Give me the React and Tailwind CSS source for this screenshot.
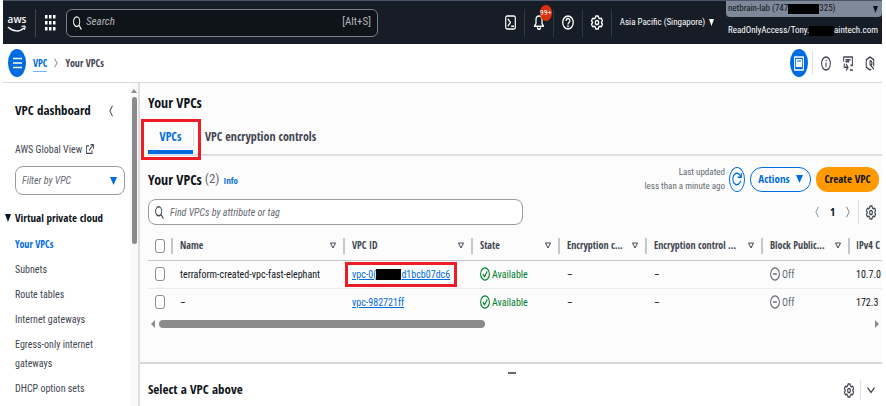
import clsx from 'clsx'

const NAV_ITEMS = [
  'Your VPCs',
  'Subnets',
  'Route tables',
  'Internet gateways',
  'Egress-only internet gateways',
  'DHCP option sets',
]

const COLUMNS = [
  { label: 'Name', width: 'w-[172px]' },
  { label: 'VPC ID', width: 'w-[128px]' },
  { label: 'State', width: 'w-[87px]' },
  { label: 'Encryption c...', width: 'w-[87px]' },
  { label: 'Encryption control ...', width: 'w-[116px]' },
  { label: 'Block Public...', width: 'w-[87px]' },
]

const ROWS = [
  { name: 'terraform-created-vpc-fast-elephant', idStart: 'vpc-0(', idEnd: 'd1bcb07dc6', cidr: '10.7.0' },
  { name: '–', idStart: 'vpc-982721ff', cidr: '172.3' },
]

const REGULAR = "font-['Roboto_Condensed','Open_Sans',sans-serif]"
const BOLD = "font-['Open_Sans_Condensed','Open_Sans',sans-serif] font-bold"

// Stroke icons share a 16x16 box and take their size from the class
function Icon({ className = 'w-[11px] h-4', children }) {
  return (
    <svg viewBox="0 0 16 16" preserveAspectRatio="none" aria-hidden="true" fill="none" stroke="currentColor"
      strokeWidth={1.7} strokeLinejoin="round" className={clsx('shrink-0', className)}>
      {children}
    </svg>
  )
}

const SearchIcon = ({ className }) => (
  <Icon className={className}><circle cx="6.5" cy="6.5" r="5.5" /><path d="M10.5 10.5 15 15.5" /></Icon>
)

const GearIcon = ({ className }) => (
  <Icon className={className}>
    <path d="M6.4 1h3.2l.6 2 1.7 1 2-.5 1.5 2.7L14 7.5v1l1.4 1.3-1.5 2.7-2-.5-1.7 1-.6 2H6.4l-.6-2-1.7-1-2 .5L.6 9.8 2 8.5v-1L.6 6.2l1.5-2.7 2 .5 1.7-1z" />
    <circle cx="8" cy="8" r="2.2" />
  </Icon>
)

const Chevron = ({ d, className }) => <Icon className={className}><path d={d} strokeWidth="2.2" /></Icon>

const LEFT = 'M12 1 5 8l7 7'
const RIGHT = 'M4 1l7 7-7 7'
const DOWN = 'M1 4l7 8 7-8'

function Triangle({ className, d = 'M0 0h8L4 8z' }) {
  return (
    <svg viewBox="0 0 8 8" preserveAspectRatio="none" aria-hidden="true" fill="currentColor" className={clsx('shrink-0', className)}>
      <path d={d} />
    </svg>
  )
}

function Divider({ className }) {
  return <span className={clsx('w-px shrink-0', className)} />
}

function TopBar() {
  return (
    <header className="flex h-11 items-center border-t border-[#4b5768] bg-[#161d26] text-white">
      <a href="#home" aria-label="aws" className="ml-1 w-5">
        <svg viewBox="0 0 20 24" className="h-6 w-5" aria-hidden="true">
          <text x="10" y="12" textAnchor="middle" fill="#fff" fontSize="10" fontFamily="Open Sans, sans-serif" fontWeight="600">aws</text>
          <path d="M1 16c5 5 12 5 16 1" fill="none" stroke="#fff" strokeWidth="1.5" />
          <path d="M14.5 15.5c2-.6 3.5-.5 3.6 0s-.2 2-1 3.3" fill="none" stroke="#fff" strokeWidth="1.2" />
        </svg>
      </a>
      <Divider className="ml-2 h-7 bg-[#424650]" />
      <button aria-label="Services" className="ml-2 w-3">
        <svg viewBox="0 0 12 16" className="h-4 w-3" fill="#fff" aria-hidden="true">
          {[0, 6, 12].map(y => [1, 5, 9].map(x => <rect key={`${x}-${y}`} x={x} y={y} width="2.5" height="3.5" />))}
        </svg>
      </button>
      <div className="ml-2.5 flex h-7 w-[312px] shrink-0 items-center rounded-md border border-[#7b7e88] bg-[#0f141a] px-1.5">
        <SearchIcon className="h-3.5 w-[9px]" />
        <input type="text" aria-label="Search" placeholder="Search"
          className="ml-1 min-w-0 flex-1 bg-transparent text-[11px] italic outline-none placeholder:text-[#b4b4bb]" />
        <span className="text-[11px] text-[#b4b4bb]">[Alt+S]</span>
      </div>

      <div className="ml-auto flex h-7 items-center">
        <button aria-label="CloudShell" className="mr-2">
          <Icon className="h-[15px] w-[11px]"><rect x="1" y="1" width="14" height="14" rx="2" /><path d="m4 4 4 4-4 4M9 12h4" /></Icon>
        </button>
        <Divider className="h-full bg-[#2f3845]" />
        <button aria-label="Notifications" className="relative mx-2 w-3">
          <Icon className="h-[15px] w-3"><path d="M8 1C5 1 4 3 4 5v4l-2 3h12l-2-3V5c0-2-1-4-4-4zM6 13c0 3 4 3 4 0" /></Icon>
          <span className="absolute -top-2.5 left-[7px] flex h-4 w-3 items-center justify-center rounded-[50%] bg-[#d9300d] text-[8px]">99+</span>
        </button>
        <Divider className="h-full bg-[#2f3845]" />
        <button aria-label="Help" className="mx-2">
          <Icon className="h-[15px] w-3"><circle cx="8" cy="8" r="7" /><path d="M5.5 6.5C5.5 3 10.5 3 10.5 6c0 2-2.5 2-2.5 4M8 11v2" /></Icon>
        </button>
        <Divider className="h-full bg-[#2f3845]" />
        <button aria-label="Settings" className="mx-2"><GearIcon className="h-[15px] w-3" /></button>
        <Divider className="h-full bg-[#2f3845]" />
        <button className="ml-2 flex items-center gap-1 whitespace-nowrap text-[9px]">
          Asia Pacific (Singapore) <Triangle className="h-[7px] w-[5px]" />
        </button>
      </div>

      <div className="ml-3 w-[156px] shrink-0 self-start whitespace-nowrap text-[9px]">
        <button className="flex h-4 w-full items-center rounded-b bg-[#7d8998] pl-0.5 pr-1 text-[#0f141a]">
          netbrain-lab (747<span className="h-[10px] w-[31px] bg-black" />325)
          <Triangle className="ml-auto h-[7px] w-[5px]" />
        </button>
        <p className="flex h-7 items-center pl-0.5">
          ReadOnlyAccess/Tony.<span className="h-[10px] min-w-4 flex-1 bg-black" /><span className="pr-1">aintech.com</span>
        </p>
      </div>
    </header>
  )
}

function Breadcrumbs() {
  return (
    <div className="flex h-[39px] items-center border-b border-[#d5d7db] pl-[5px] pr-[7px] text-[#424650]">
      <button aria-label="Menu" className="flex h-7 w-[18px] items-center justify-center rounded-[50%] bg-[#006ce0] text-white">
        <Icon className="h-3 w-[9px]"><path d="M0 2h16M0 8h16M0 14h16" /></Icon>
      </button>
      <nav aria-label="Breadcrumbs" className={clsx('ml-[7px] flex items-center text-[10px]', BOLD)}>
        <a href="#vpc" className="border-b border-[#75b6f8] leading-4 text-[#006ce0]">VPC</a>
        <Chevron d={RIGHT} className="mx-1.5 h-2.5 w-1.5 text-[#8c8c94]" />
        <span>Your VPCs</span>
      </nav>
      <div className="ml-auto flex items-center">
        <button aria-label="Panels" className="flex h-7 w-[18px] items-center justify-center rounded-[50%] bg-[#006ce0] text-white">
          <Icon className="h-[15px] w-2.5">
            <rect x="1" y="1" width="14" height="14" /><rect x="4" y="4" width="8" height="3" /><rect x="4" y="7" width="8" height="4" fill="#fff" />
          </Icon>
        </button>
        <Divider className="mx-1 h-6 bg-[#e0e1e5]" />
        <button aria-label="Info panel" className="ml-1">
          <Icon className="h-[15px] w-2.5"><circle cx="8" cy="8" r="7" /><path d="M8 7v5M8 4v1.5" /></Icon>
        </button>
        <button aria-label="Shell" className="ml-3">
          <Icon className="h-[15px] w-2.5"><path d="M1 6V1h14v9h-3M4 4h8M4 6h6M2 8v4h6M5 8.5l3 3.5-3 3.5M11 15h5" /></Icon>
        </button>
        <button aria-label="Recent" className="ml-3">
          <Icon className="h-[15px] w-2.5"><path d="M8 15 2 12V4l6-3 6 3v7M8 15l2-1M8 5v4l6 5M8 9h3a3 3 0 0 0-3-4" /></Icon>
        </button>
      </div>
    </div>
  )
}

function Sidebar() {
  return (
    <aside className="flex w-[137px] shrink-0 border-r-2 border-[#dedee3]">
      <div className="min-w-0 flex-1 text-[10px] text-[#424650]">
        <div className="mt-[18px] flex h-5 items-center justify-between pl-3 pr-4">
          <h2 className={clsx('whitespace-nowrap text-[13px] text-[#0f141a]', BOLD)}>VPC dashboard</h2>
          <button aria-label="Collapse"><Chevron d={LEFT} className="h-3 w-1.5" /></button>
        </div>
        <a href="#global" className="mt-5 flex h-4 items-center gap-1 pl-3">
          AWS Global View
          <Icon className="h-2.5 w-2"><path d="M6 3H1v12h11v-5M9 1h6v7M15 1 6 10" /></Icon>
        </a>
        <div className="relative ml-3 mt-[9px] w-[110px]">
          <select aria-label="Filter by VPC"
            className="h-[29px] w-full appearance-none rounded-lg border border-[#9a9ba3] bg-white pl-1.5 text-[10px] italic text-[#656871] outline-none">
            <option>Filter by VPC</option>
          </select>
          <Triangle className="pointer-events-none absolute right-2 top-[11px] h-2 w-[7px] text-[#006ce0]" />
        </div>
        <h3 className={clsx('mt-[13px] flex h-5 items-center gap-1 pl-0.5 text-[11px] text-[#0f141a]', BOLD)}>
          <Triangle className="h-2 w-[6px]" /> Virtual private cloud
        </h3>
        <ul className="mt-[7px] space-y-1.5 pl-3 pr-6 leading-[19px]">
          {NAV_ITEMS.map((item, i) => (
            <li key={item}>
              <a href="#nav" className={clsx(i === 0 && ['text-[#006ce0]', BOLD])}>{item}</a>
            </li>
          ))}
        </ul>
      </div>
      <div className="flex w-2 shrink-0 flex-col items-center bg-[#fafafa] pt-1.5">
        <Triangle d="M4 0l4 8H0z" className="h-1 w-1.5 text-[#8b8b8b]" />
        <span className="mt-1 h-[147px] w-[5px] rounded-full bg-[#8b8b8b]" />
      </div>
    </aside>
  )
}

function Status({ ok, children }) {
  return (
    <span className={clsx('flex items-center gap-0.5', ok ? 'text-[#00802f]' : 'text-[#656871]')}>
      <Icon className="h-[14px] w-2.5"><circle cx="8" cy="8" r="7" /><path d={ok ? 'm4.5 8 3 3 4-6' : 'M5 8h6'} /></Icon>
      {children}
    </span>
  )
}

function Checkbox({ label }) {
  return (
    <input type="checkbox" aria-label={label}
      className="ml-[7px] block h-[14px] w-[10px] appearance-none rounded-[3px] border border-[#8c8c94] bg-white" />
  )
}

function VpcTable() {
  return (
    <div className="overflow-hidden">
      <table className="w-full table-fixed whitespace-nowrap text-left text-[10px] text-[#0f141a]">
        <thead className={clsx('text-[#424650]', BOLD)}>
          <tr className="h-7 border-b border-[#c6c6cd]">
            <th className="w-[23px]"><Checkbox label="Select all" /></th>
            {COLUMNS.map(c => (
              <th key={c.label} className={c.width}>
                <div className="flex h-4 items-center justify-between border-l-2 border-[#c6c6cd] px-[7px]">
                  {c.label}
                  <svg viewBox="0 0 6 7" className="h-[7px] w-1.5 shrink-0" fill="none" stroke="currentColor" aria-hidden="true">
                    <path d="M.5 1h5L3 6z" />
                  </svg>
                </div>
              </th>
            ))}
            <th>
              <div className="flex h-4 items-center border-l-2 border-[#c6c6cd] pl-1.5">IPv4 C</div>
            </th>
          </tr>
        </thead>
        <tbody>
          {ROWS.map((row, i) => (
            <tr key={row.idStart} className={clsx('h-7', i === 0 && 'border-b border-[#ebebf0]')}>
              <td><Checkbox label={`Select ${row.name}`} /></td>
              <td className="pl-[9px]">{row.name}</td>
              <td className="pl-[9px]">
                <span className="relative inline-flex items-center text-[#006ce0]">
                  <a href="#vpc-id" className="inline-flex items-center underline">
                    {row.idStart}
                    {row.idEnd && <span className="h-[11px] w-[25px] bg-black" />}
                    {row.idEnd}
                  </a>
                  {row.idEnd && <span className="absolute -inset-x-[7px] -inset-y-[5px] border-3 border-[#ee1c25]" />}
                </span>
              </td>
              <td className="pl-[9px]"><Status ok>Available</Status></td>
              <td className="pl-[9px]">–</td>
              <td className="pl-[9px]">–</td>
              <td className="pl-[9px]"><Status>Off</Status></td>
              <td className="pl-2">{row.cidr}</td>
            </tr>
          ))}
        </tbody>
      </table>
      <div className="mt-[3px] flex h-2.5 items-center px-[3px] text-[#8b8b8b]">
        <Triangle d="M8 0v8L0 4z" className="h-2 w-1" />
        <span className="ml-1 h-2 w-[326px] rounded-full bg-[#8b8b8b]" />
        <Triangle d="M0 0v8l8-4z" className="ml-auto h-2 w-1" />
      </div>
    </div>
  )
}

function VpcList() {
  return (
    <section className="border-b-2 border-[#d5d7db] bg-[#fcfcfc] pb-[33px] pl-2 text-[#0f141a]">
      <h1 className={clsx('pt-2.5 text-[14px] leading-5', BOLD)}>Your VPCs</h1>

      <div role="tablist" className={clsx('mt-[7px] flex h-9 items-center border-b-2 border-[#dedee3] text-[12px]', BOLD)}>
        <div className="relative h-full w-[45px]">
          <button role="tab" aria-selected="true" className="h-full w-full border-b-4 border-[#006ce0] pt-1 text-[#006ce0]">VPCs</button>
          <span className="pointer-events-none absolute -bottom-1.5 -left-[7px] -right-2 -top-px border-3 border-[#ee1c25]" />
        </div>
        <Divider className="h-[18px] bg-[#dedee3]" />
        <button role="tab" aria-selected="false" className="ml-[11px] text-[#424650]">VPC encryption controls</button>
      </div>

      <div className="mt-[9px] flex h-7 items-center">
        <h2 className={clsx('text-[14px]', BOLD)}>Your VPCs</h2>
        <span className="ml-[3px] text-[13px] text-[#656871]">(2)</span>
        <a href="#info" className={clsx('ml-1 mt-1 text-[9px] text-[#006ce0]', BOLD)}>Info</a>
        <p className="ml-auto text-right text-[9px] leading-[14px] text-[#656871]">Last updated<br />less than a minute ago</p>
        <button aria-label="Refresh" className="ml-1 flex h-[25px] w-4 items-center justify-center rounded-[50%] border border-[#006ce0] text-[#006ce0]">
          <Icon className="h-3.5 w-2.5"><path d="M14 10a6.5 6.5 0 1 1-1-6l1 2M15 1v5H9" /></Icon>
        </button>
        <button className={clsx('ml-[5px] flex h-[25px] w-[61px] items-center justify-center gap-1.5 rounded-xl border border-[#006ce0] text-[11px] text-[#006ce0]', BOLD)}>
          Actions <Triangle className="h-2 w-[7px]" />
        </button>
        <button className={clsx('ml-[5px] mr-[3px] h-[25px] w-[63px] rounded-xl bg-[#ff9900] text-[11px]', BOLD)}>Create VPC</button>
      </div>

      <div className="mb-[7px] mt-1.5 flex h-[26px] items-center">
        <label className="flex h-full w-[375px] items-center gap-1.5 rounded-lg border border-[#9a9ba3] bg-white px-1.5">
          <SearchIcon className="h-[13px] w-[9px] text-[#424650]" />
          <input type="text" aria-label="Find VPCs" placeholder="Find VPCs by attribute or tag"
            className="min-w-0 flex-1 bg-transparent text-[10px] italic outline-none placeholder:text-[#656871]" />
        </label>
        <div className="ml-auto mr-1.5 flex h-full items-center text-[#424650]">
          <button aria-label="Previous page"><Chevron d={LEFT} className="h-3 w-1.5 text-[#9a9ba3]" /></button>
          <span className={clsx('mx-2.5 text-[11px] text-[#0f141a]', BOLD)}>1</span>
          <button aria-label="Next page"><Chevron d={RIGHT} className="h-3 w-1.5 text-[#8c8c94]" /></button>
          <Divider className="mx-[7px] h-6 bg-[#dedee3]" />
          <button aria-label="Preferences"><GearIcon className="h-[15px] w-2.5" /></button>
        </div>
      </div>

      <VpcTable />
    </section>
  )
}

function SplitPanel() {
  return (
    <section className="pl-2 pr-[7px]">
      <button aria-label="Resize panel" className="mx-auto mt-2 block h-0.5 w-2 bg-[#656871]" />
      <div className="mt-1.5 flex h-5 items-center">
        <h2 className={clsx('text-[13px] text-[#0f141a]', BOLD)}>Select a VPC above</h2>
        <button aria-label="Panel preferences" className="ml-auto"><GearIcon className="h-[15px] w-2.5 text-[#424650]" /></button>
        <Divider className="mx-1.5 h-5 bg-[#dedee3]" />
        <button aria-label="Expand"><Chevron d={DOWN} className="h-2.5 w-2 text-[#424650]" /></button>
      </div>
    </section>
  )
}

export default function App() {
  return (
    <div className={clsx('h-screen overflow-hidden bg-white pl-[3px] pr-1', REGULAR)}>
      <TopBar />
      <Breadcrumbs />
      <div className="flex h-full">
        <Sidebar />
        <main className="min-w-0 flex-1">
          <VpcList />
          <SplitPanel />
        </main>
      </div>
    </div>
  )
}
